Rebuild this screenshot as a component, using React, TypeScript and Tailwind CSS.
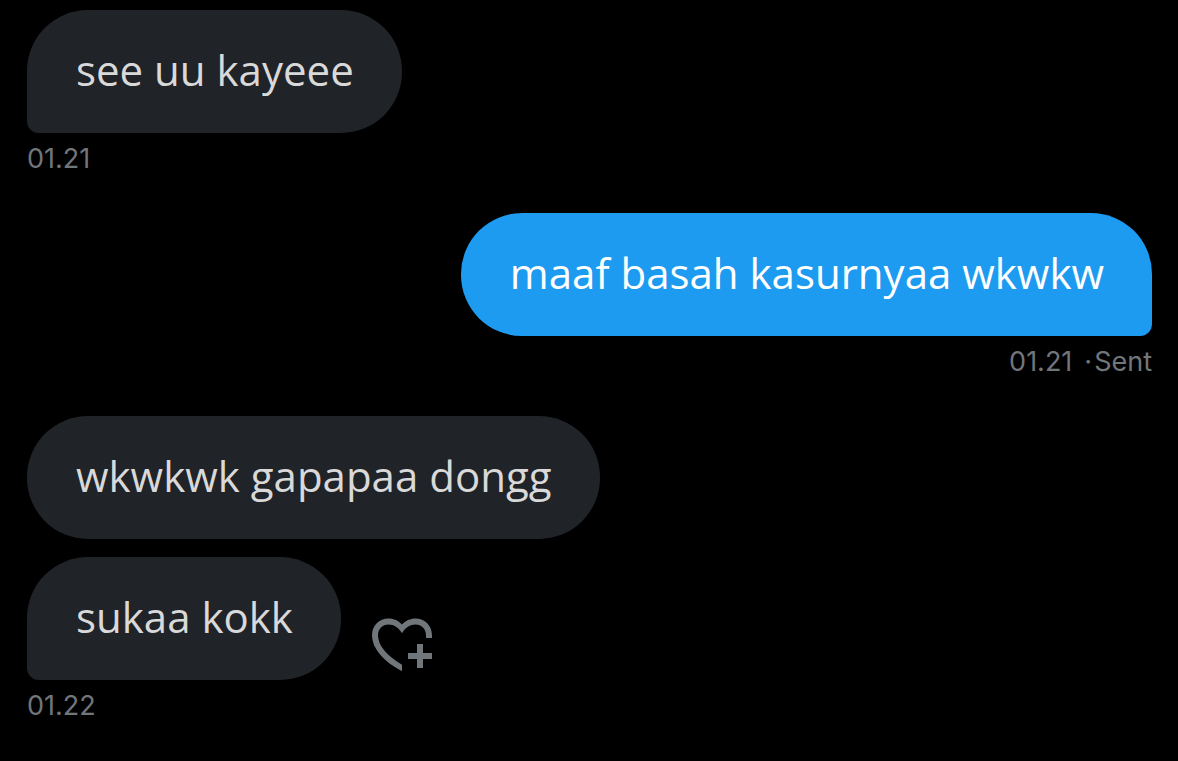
import React from 'react';
import clsx from 'clsx';

interface Message {
  text: string;
  canReact?: boolean;
}

interface MessageGroup {
  mine: boolean;
  time: string;
  status?: string;
  messages: Message[];
}

const groups: MessageGroup[] = [
  { mine: false, time: '01.21', messages: [{ text: 'see uu kayeee' }] },
  { mine: true, time: '01.21', status: 'Sent', messages: [{ text: 'maaf basah kasurnyaa wkwkw' }] },
  {
    mine: false,
    time: '01.22',
    messages: [{ text: 'wkwkwk gapapaa dongg' }, { text: 'sukaa kokk', canReact: true }],
  },
];

const HeartPlusIcon = () => (
  <svg viewBox="0 0 24 24" className="w-[72px] h-[72px]" fill="currentColor" aria-hidden="true">
    <path d="M7.5 3.5C9.3 3.5 10.9 4.25 12 5.5C13.1 4.25 14.7 3.5 16.5 3.5C19.6 3.5 22 5.9 22 9.1V10H20V9.1C20 7 18.5 5.5 16.5 5.5C14.7 5.5 13.1 6.5 12 8.4C10.9 6.5 9.3 5.5 7.5 5.5C5.5 5.5 4 7 4 9.1C4 12.5 7 16 12 18.9V21.1C5.6 17.7 2 13.4 2 9.1C2 5.9 4.4 3.5 7.5 3.5Z" />
    <path d="M17 12h2v3h3v2h-3v3h-2v-3h-3v-2h3z" />
  </svg>
);

interface BubbleProps {
  message: Message;
  mine: boolean;
  last: boolean;
}

const Bubble: React.FC<BubbleProps> = ({ message, mine, last }) => (
  <div className={clsx('flex items-end gap-[25px]', mine && 'justify-end')}>
    <p
      className={clsx(
        "rounded-[61px] pl-[49px] pr-12 pt-[30px] pb-[33px] font-['Open_Sans',sans-serif] text-[42px] leading-[60px]",
        mine ? 'bg-[#1d9bf0] text-white' : 'bg-[#202327] text-[#d9d9d9]',
        last && (mine ? 'rounded-br-[12px]' : 'rounded-bl-[12px]')
      )}
    >
      {message.text}
    </p>
    {message.canReact && (
      <button type="button" aria-label="Add reaction" className="shrink-0 text-[#71767b]">
        <HeartPlusIcon />
      </button>
    )}
  </div>
);

const App: React.FC = () => {
  return (
    <main className="min-h-screen bg-black pt-[10px] pr-[26px] pl-[27px]">
      <div className="flex flex-col gap-[38px]">
        {groups.map((group, i) => (
          <section key={i} className="flex flex-col">
            <div className="flex flex-col gap-[18px]">
              {group.messages.map((message, j) => (
                <Bubble
                  key={j}
                  message={message}
                  mine={group.mine}
                  last={j === group.messages.length - 1}
                />
              ))}
            </div>
            <div
              className={clsx(
                "mt-[10px] flex font-['Inter',sans-serif] text-[27px] leading-8 text-[#71767b]",
                group.mine && 'justify-end'
              )}
            >
              <time>{group.time}</time>
              {group.status && (
                <>
                  <span className="mr-0.5 ml-3">·</span>
                  <span>{group.status}</span>
                </>
              )}
            </div>
          </section>
        ))}
      </div>
    </main>
  );
};

export default App;
